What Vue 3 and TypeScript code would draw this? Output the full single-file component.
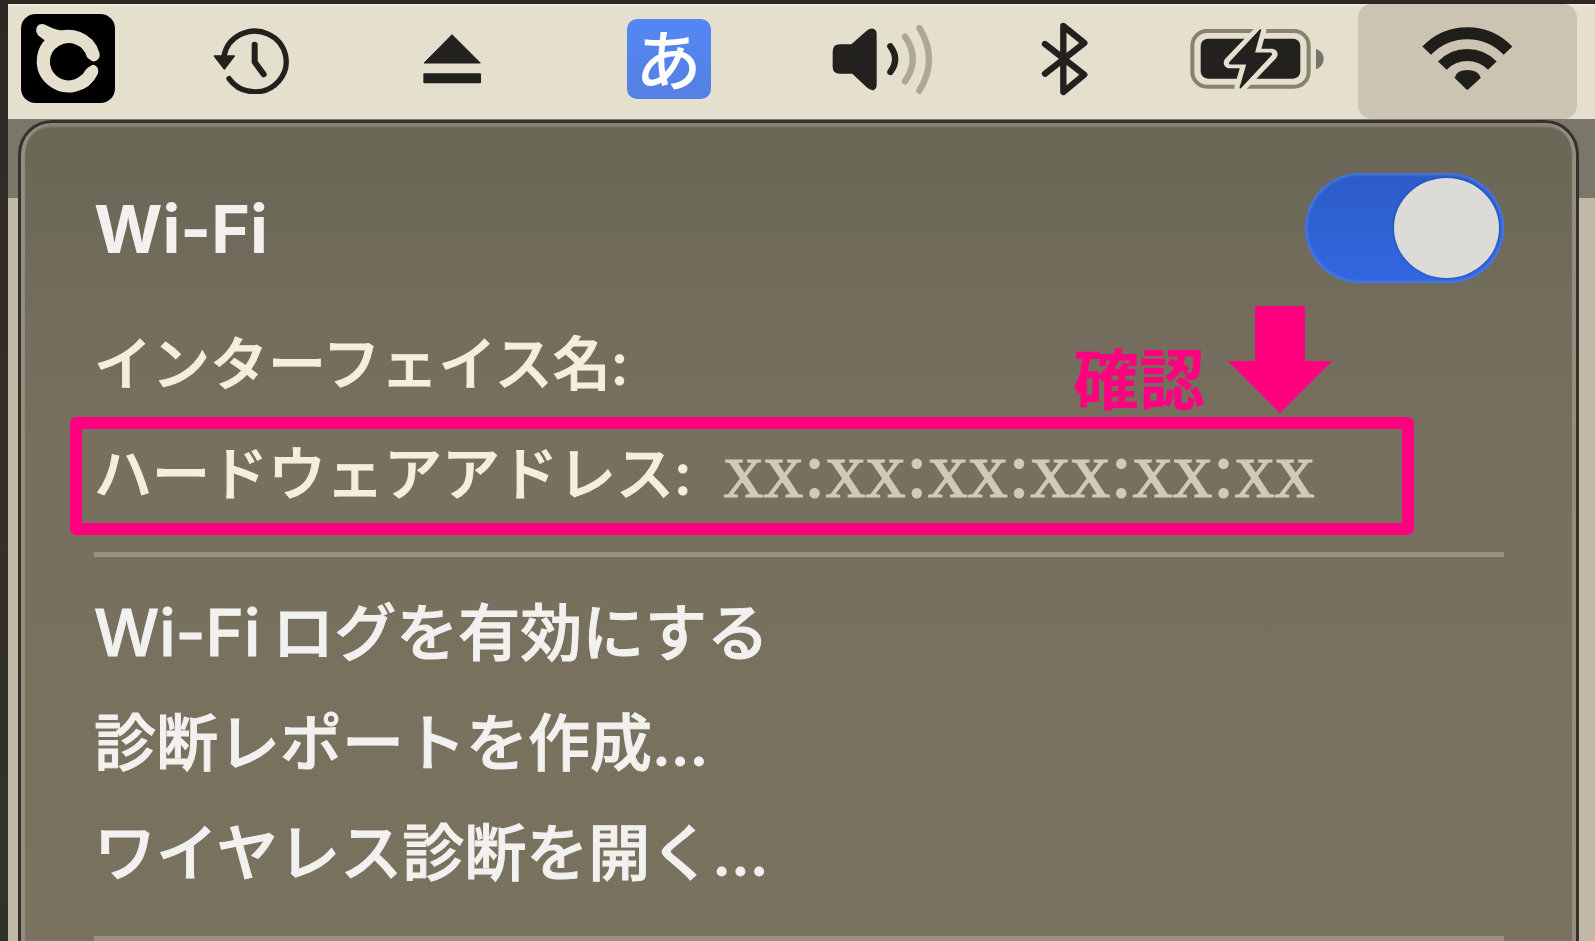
<script setup lang="ts">
import { ref } from 'vue'

const wifiOn = ref<boolean>(true)
const hardwareAddress = 'xx:xx:xx:xx:xx:xx'
const actions: { latin: string; label: string; dots: string }[] = [
  { latin: 'Wi-Fi', label: 'ログを有効にする', dots: '' },
  { latin: '', label: '診断レポートを作成', dots: '...' },
  { latin: '', label: 'ワイヤレス診断を開く', dots: '...' },
]
</script>

<template>
  <div class="desktop">
    <nav class="menubar" aria-label="メニューバー">
      <button type="button" class="item" aria-label="アプリ">
        <svg width="94" height="89" viewBox="62 42 283 268">
          <rect x="62" y="42" width="283" height="268" rx="44" fill="#000" />
          <path d="M279 165A76 74 0 1 0 275 214" fill="none" stroke="#e5dfcd" stroke-width="40" stroke-linecap="round" />
          <path d="M114 107Q103 92 111 79Q121 67 138 76Q170 94 208 94L175 135L128 142Q138 128 134 122Z" fill="#e5dfcd" />
          <circle cx="205" cy="187" r="55" fill="#000" />
          <path d="M246 150Q260 182 290 190Q260 198 246 226Z" fill="#000" />
        </svg>
      </button>
      <button type="button" class="item" aria-label="Time Machine">
        <svg width="77" height="70" viewBox="640 72 231 210">
          <path d="M673 168A94 91 0 1 1 688 236" fill="none" stroke="#22211e" stroke-width="16" stroke-linecap="round" />
          <path d="M644 168H704L674 207Z" fill="#22211e" stroke="#22211e" stroke-width="4" stroke-linejoin="round" />
          <path d="M765 134V186L792 223" fill="none" stroke="#22211e" stroke-width="18" stroke-linecap="round" stroke-linejoin="round" />
        </svg>
      </button>
      <button type="button" class="item" aria-label="取り出す">
        <svg width="60" height="52" viewBox="124 100 180 156">
          <path d="M214 105L299 190H130Z" fill="#22211e" stroke="#22211e" stroke-width="3" stroke-linejoin="round" />
          <rect x="128" y="221" width="173" height="30" rx="3" fill="#22211e" />
        </svg>
      </button>
      <button type="button" class="item" aria-label="入力ソース ひらがな">
        <span class="kana">あ</span>
      </button>
      <button type="button" class="item" aria-label="音量">
        <svg width="101" height="70" viewBox="96 72 303 210">
          <path d="M120 133H154L200 92Q212 83 222 87Q230 91 230 100V256Q230 266 222 270Q212 273 200 262L157 221H120Q98 221 98 200V155Q98 133 120 133Z" fill="#22211e" />
          <path d="M271 139Q300 177 271 216" fill="none" stroke="#22211e" stroke-width="19" stroke-linecap="round" />
          <path d="M315 110Q362 177 315 244M358 84Q416 177 358 272" fill="none" stroke="#aca796" stroke-width="19" stroke-linecap="round" />
        </svg>
      </button>
      <button type="button" class="item" aria-label="Bluetooth">
        <svg width="47" height="74" viewBox="722 67 141 222">
          <path d="M734 133L852 225L789 277V79L852 130L734 222" fill="none" stroke="#22211e" stroke-width="19" stroke-linecap="round" stroke-linejoin="round" />
        </svg>
      </button>
      <button type="button" class="item" aria-label="バッテリー">
        <svg width="134" height="62" viewBox="90 84 402 186">
          <rect x="97" y="93" width="349" height="167" rx="44" fill="none" stroke="#87836f" stroke-width="12" />
          <rect x="122" y="116" width="299" height="120" rx="22" fill="#22211e" />
          <path d="M302 90L208 188H262L240 263L336 163H282Z" fill="#e5dfcd" stroke="#e5dfcd" stroke-width="34" stroke-linejoin="round" />
          <path d="M301 90L210 188Q208 191 212 191H262L241 263L333 164Q335 161 331 160H282Z" fill="#22211e" stroke="#22211e" stroke-width="5" stroke-linejoin="round" />
          <path d="M468 146Q491 155 491 177Q491 199 468 208Z" fill="#77746a" />
        </svg>
      </button>
      <button type="button" class="item item-active" aria-label="Wi-Fi メニュー" aria-expanded="true">
        <svg width="91" height="64" viewBox="785 76 273 192">
          <path d="M799 150A168 168 0 0 1 1043 150" fill="none" stroke="#1f1e1b" stroke-width="36" />
          <path d="M846 195A104 104 0 0 1 996 195" fill="none" stroke="#1f1e1b" stroke-width="36" />
          <path d="M884 229Q890 208 921 208Q953 208 960 229Q962 231 960 233L925 265Q921 269 917 265L884 233Q882 231 884 229Z" fill="#1f1e1b" />
        </svg>
      </button>
    </nav>

    <main class="backdrop">
      <section class="panel">
        <div class="header">
          <label for="wifi-switch" class="title">Wi-Fi</label>
          <input id="wifi-switch" v-model="wifiOn" type="checkbox" role="switch" class="switch" />
        </div>

        <div class="info">インターフェイス名<span class="latin">:</span></div>

        <div class="info marked">
          <span>ハードウェアアドレス<span class="latin">:</span></span>
          <span class="address">{{ hardwareAddress }}</span>
          <div class="callout">
            <span>確認</span>
            <svg width="104" height="107" viewBox="0 0 104 107" aria-hidden="true">
              <path d="M27 0H77V55H104L52 107L0 55H27Z" fill="#ff0080" />
            </svg>
          </div>
        </div>

        <hr class="rule" />
        <div class="actions">
          <button v-for="action in actions" :key="action.label" type="button" class="action">
            <span v-if="action.latin" class="latin action-latin">{{ action.latin }}</span>{{ action.label }}<span class="latin">{{ action.dots }}</span>
          </button>
        </div>
        <hr class="rule" />
      </section>
    </main>
  </div>
</template>

<style>
body {
  margin: 0;
}
</style>

<style scoped>
.desktop {
  box-sizing: border-box;
  min-height: 100vh;
  display: flex;
  flex-direction: column;
  padding: 4px 0 0 8px;
  background: linear-gradient(#2b2922, #352f28 50%, #31312b);
  font-family: Inter, "Noto Sans CJK JP", sans-serif;
}

.menubar {
  display: grid;
  grid-template-columns: 120fr 247fr 153fr 281fr 147fr 216fr 170fr 253fr;
  height: 115px;
  box-sizing: border-box;
  border-top: 2px solid #efe7d5;
  background: #e5dfcd;
}

.item {
  display: flex;
  align-items: center;
  justify-content: center;
  margin: 0;
  padding: 0 0 8px;
  border: 0;
  background: none;
}

.item svg {
  display: block;
  flex: none;
}

.item-active {
  margin: -2px 18px 0 16px;
  border-radius: 14px;
  background: #cbc4b2;
}

.kana {
  width: 84px;
  height: 80px;
  border-radius: 10px;
  background: linear-gradient(#5487f4, #5580e4);
  color: #fff;
  font-family: "Noto Sans CJK JP", sans-serif;
  font-size: 66px;
  font-weight: 500;
  line-height: 74px;
  text-align: center;
}

.backdrop {
  flex: 1;
  display: flex;
  padding: 1px 16px 0 10px;
  background: linear-gradient(#7a766a 79px, #c0b9a5 79px);
}

.panel {
  flex: 1;
  box-sizing: border-box;
  padding: 50px 72px 0 73px;
  border: 3px solid #33322b;
  border-bottom: 0;
  border-radius: 34px 34px 0 0;
  background: linear-gradient(#6a6757, #6d6959 90px, #746d5d 200px, #77705e 330px, #79725f);
  box-shadow: inset 4px 0 1px #938e7e, inset -4px 0 1px #938e7e, inset 0 4px 2px #8a8676;
}

.header {
  display: flex;
  align-items: center;
  justify-content: space-between;
  height: 110px;
}

.title {
  padding-top: 2px;
  color: #f2f1f0;
  font-size: 66px;
  font-weight: 700;
}

.switch {
  appearance: none;
  width: 199px;
  height: 110px;
  margin: 0;
  padding: 5px;
  display: flex;
  border-radius: 55px;
  background: #8b8778;
  box-shadow: inset 0 0 3px 2px #4c7be2;
}

.switch::before {
  content: "";
  width: 105px;
  height: 100px;
  border-radius: 50%;
  background: #dcdbd7;
  box-shadow: 0 0 3px #1e479f;
}

.switch:checked {
  justify-content: flex-end;
  background: linear-gradient(#2c5cc6, #3267e2);
}

.info {
  margin-top: 22px;
  padding-bottom: 2px;
  color: #f5eedc;
  font-family: "Noto Sans CJK JP", sans-serif;
  font-size: 58px;
  font-weight: 500;
  line-height: 110px;
  white-space: nowrap;
  -webkit-text-stroke: 1px currentColor;
}

.latin {
  font-family: Inter, sans-serif;
  line-height: 0;
}

.marked {
  position: relative;
  display: flex;
  gap: 32px;
  margin: 0 90px 0 -24px;
  padding: 0 0 12px 12px;
  border: 12px solid #ff0080;
  border-radius: 6px;
  line-height: 82px;
}

.address {
  color: #d1cab7;
  font-family: "Liberation Serif", serif;
  font-size: 80px;
  font-weight: 400;
}

.callout {
  position: absolute;
  right: 70px;
  bottom: 110px;
  display: flex;
  align-items: flex-end;
  gap: 23px;
  color: #ff0080;
  font-size: 66px;
  font-weight: 700;
  line-height: 76px;
  -webkit-text-stroke: 0;
}

.rule {
  height: 5px;
  margin: 17px 0 21px;
  border: 0;
  background: #9a917e;
}

.actions {
  display: flex;
  flex-direction: column;
}

.action {
  height: 110px;
  margin: 0;
  padding: 0 0 8px;
  border: 0;
  background: none;
  color: #f2f1ef;
  font-family: "Noto Sans CJK JP", sans-serif;
  font-size: 62px;
  font-weight: 500;
  line-height: 102px;
  text-align: left;
  white-space: nowrap;
  -webkit-text-stroke: 1px currentColor;
}

.action-latin {
  margin-right: 12px;
  font-size: 65px;
}

.actions + .rule {
  margin: 28px 0 0;
}
</style>
